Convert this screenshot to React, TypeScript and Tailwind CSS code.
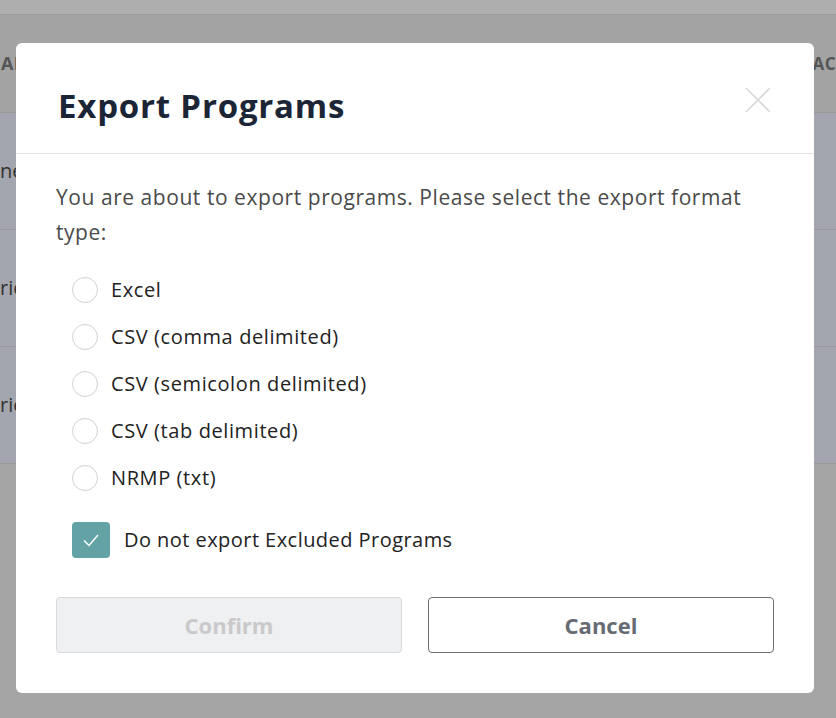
import { useState } from 'react';

const formats = [
  'Excel',
  'CSV (comma delimited)',
  'CSV (semicolon delimited)',
  'CSV (tab delimited)',
  'NRMP (txt)',
];

function App() {
  const [format, setFormat] = useState<string | null>(null);
  const [excludeChecked, setExcludeChecked] = useState(true);

  return (
    <div className="relative w-[836px] h-[718px] overflow-hidden bg-[#a5a5a5] font-['Open_Sans',sans-serif]">
      {/* Dimmed table behind the modal */}
      <div className="h-[15px] bg-[#aeaeae] border-b border-[#9c9c9c]" />
      <div className="h-[98px] bg-[#a3a3a3] border-b border-[#999] flex items-center justify-between">
        <span className="text-[18px] font-bold text-[#555] tracking-wide pl-[1px]">AREA</span>
        <span className="text-[17px] font-bold text-[#555] tracking-wide whitespace-nowrap">AC</span>
      </div>
      <div className="bg-[#a3a6ae]">
        <div className="h-[117px] border-b border-[#999] flex items-center">
          <span className="text-[20px] text-[#333]">ne</span>
        </div>
        <div className="h-[117px] border-b border-[#999] flex items-center">
          <span className="text-[20px] text-[#333]">ric</span>
        </div>
        <div className="h-[117px] border-b border-[#999] flex items-center">
          <span className="text-[20px] text-[#333]">ric</span>
        </div>
      </div>

      {/* Modal */}
      <div className="absolute left-[16px] top-[43px] w-[798px] h-[650px] bg-white rounded-[6px] flex flex-col">
        <div className="h-[111px] border-b border-[#e2e2e8] flex items-center justify-between pl-[42px] pr-[43px]">
          <h1 className="text-[33px] font-bold text-[#1b2536] mt-[16px] tracking-[0.8px]">Export Programs</h1>
          <button className="w-[26px] h-[26px] flex items-center justify-center mt-[4px]">
            <svg width="26" height="26" viewBox="0 0 26 26" fill="none" stroke="#d9d9d9" strokeWidth="1.6">
              <path d="M1 1 L25 25 M25 1 L1 25" />
            </svg>
          </button>
        </div>

        <div className="flex-1 px-[40px] pt-[26px] pb-[40px] flex flex-col">
          <p className="text-[21px] leading-[35px] text-[#4a4a4a] tracking-[0.55px]">
            You are about to export programs. Please select the export format type:
          </p>

          <div className="mt-[16px] ml-[16px] flex flex-col">
            {formats.map((f) => (
              <label key={f} className="h-[47px] flex items-center gap-[13px] cursor-pointer" onClick={() => setFormat(f)}>
                <span className="w-[26px] h-[26px] rounded-full border border-[#d2d2d2] bg-white flex items-center justify-center">
                  {format === f && <span className="w-[12px] h-[12px] rounded-full bg-[#62a3a5]" />}
                </span>
                <span className="text-[20px] text-[#222] tracking-[0.6px]">{f}</span>
              </label>
            ))}
          </div>

          <label
            className="mt-[21px] ml-[16px] h-[36px] flex items-center gap-[14px] cursor-pointer"
            onClick={() => setExcludeChecked(!excludeChecked)}
          >
            <span
              className={`w-[38px] h-[36px] rounded-[4px] flex items-center justify-center ${
                excludeChecked ? 'bg-[#63a3a5]' : 'bg-white border border-[#d2d2d2]'
              }`}
            >
              {excludeChecked && (
                <svg width="20" height="16" viewBox="0 0 20 16" fill="none" stroke="white" strokeWidth="1.5">
                  <path d="M3 8.5 L8 13.5 L17 3" />
                </svg>
              )}
            </span>
            <span className="text-[20px] text-[#222] tracking-[0.45px]">Do not export Excluded Programs</span>
          </label>

          <div className="mt-auto flex gap-[26px]">
            <button
              disabled={format === null}
              className="flex-1 h-[56px] rounded-[4px] border border-[#d8d9dd] bg-[#eff0f2] text-[22px] font-bold text-[#c9c9cb]"
            >
              Confirm
            </button>
            <button className="flex-1 h-[56px] rounded-[4px] border border-[#6c6e74] bg-white text-[22px] font-bold text-[#676b73]">
              Cancel
            </button>
          </div>
        </div>
      </div>
    </div>
  );
}

export default App;
